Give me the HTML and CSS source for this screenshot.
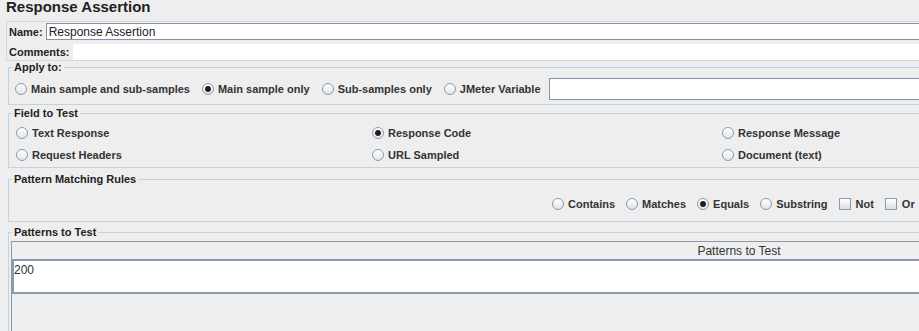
FILE: index.html
```html
<!doctype html>
<html lang="en">
  <head>
    <meta charset="UTF-8" />
    <title>Response Assertion</title>
    <link rel="stylesheet" href="styles.css">
  </head>
  <body>
    <div class="page">
      <h1 class="title">Response Assertion</h1>

      <!-- Name / comments -->
      <div class="name-panel">
        <div class="name-row">
          <label>Name:</label>
          <input class="text-field" type="text" value="Response Assertion" />
        </div>
        <div class="name-row">
          <label>Comments:</label>
          <div class="comment-field"></div>
        </div>
      </div>

      <fieldset class="group apply-to">
        <legend>Apply to:</legend>
        <div class="option-row">
          <span class="option"><span class="radio"></span>Main sample and sub-samples</span>
          <span class="option"><span class="radio on"></span>Main sample only</span>
          <span class="option"><span class="radio"></span>Sub-samples only</span>
          <span class="option"><span class="radio"></span>JMeter Variable</span>
          <div class="var-field"></div>
        </div>
      </fieldset>

      <fieldset class="group field-test">
        <legend>Field to Test</legend>
        <div class="field-grid">
          <span class="option"><span class="radio"></span>Text Response</span>
          <span class="option"><span class="radio on"></span>Response Code</span>
          <span class="option"><span class="radio"></span>Response Message</span>
          <span class="option"><span class="radio"></span>Request Headers</span>
          <span class="option"><span class="radio"></span>URL Sampled</span>
          <span class="option"><span class="radio"></span>Document (text)</span>
        </div>
      </fieldset>

      <fieldset class="group rules">
        <legend>Pattern Matching Rules</legend>
        <div class="option-row rule-row">
          <span class="option"><span class="radio"></span>Contains</span>
          <span class="option"><span class="radio"></span>Matches</span>
          <span class="option"><span class="radio on"></span>Equals</span>
          <span class="option"><span class="radio"></span>Substring</span>
          <span class="option"><span class="check"></span>Not</span>
          <span class="option"><span class="check"></span>Or</span>
        </div>
      </fieldset>

      <fieldset class="group patterns">
        <legend>Patterns to Test</legend>
        <div class="table">
          <div class="table-head">Patterns to Test</div>
          <div class="table-row">200</div>
          <div class="table-rest"></div>
        </div>
      </fieldset>
    </div>
  </body>
</html>
```

FILE: styles.css
```css
html,
body {
  margin: 0;
  padding: 0;
  background: #eeeeee;
  overflow: hidden;
}
body {
  font-family: "Liberation Sans", Arial, sans-serif;
  font-size: 11px;
  color: #333;
}
.page {
  width: 1460px;
  padding: 0 0 0 6px;
}
.title {
  font-size: 15px;
  font-weight: bold;
  color: #222;
  margin: -2px 0 0 0;
  height: 23px;
  line-height: 18px;
}
.name-panel {
  border: 1px solid #d4d8dc;
  border-right: none;
  padding: 1px 0 0 2px;
  display: flex;
  flex-direction: column;
  gap: 4px;
}
.name-row {
  display: flex;
  align-items: center;
  height: 17px;
}
.name-row + .name-row {
  height: 16px;
}
.name-row label {
  font-weight: bold;
  color: #222;
  padding-right: 3px;
}
.text-field {
  flex: 1;
  height: 17px;
  box-sizing: border-box;
  border: 1px solid #7f95ae;
  border-right: none;
  font-family: "Liberation Sans", Arial, sans-serif;
  font-size: 12px;
  color: #222;
  padding: 0 2px;
  margin: 0;
  outline: none;
}
.comment-field {
  flex: 1;
  height: 16px;
  background: #fff;
}
.group {
  margin: 0 0 0 2px;
  border: 1px solid #bfd3e6;
  border-right: none;
  padding: 0 0 0 6px;
}
.group legend {
  font-weight: bold;
  color: #222;
  padding: 0 2px;
  margin-left: -3px;
  line-height: 12px;
}
.option-row {
  display: flex;
  align-items: center;
  gap: 12px;
  height: 30px;
  padding-top: 1px;
}
.option {
  display: inline-flex;
  align-items: center;
  gap: 4px;
  font-weight: bold;
  white-space: nowrap;
  line-height: 14px;
}
.radio {
  width: 12px;
  height: 12px;
  box-sizing: border-box;
  border-radius: 50%;
  border: 1px solid #8e9aa8;
  background: linear-gradient(#ffffff, #dfe5ec);
}
.radio.on {
  background: radial-gradient(circle, #1c1c1c 0 2.4px, #555 2.8px, transparent 3.4px),
    linear-gradient(#ffffff, #dfe5ec);
}
.check {
  width: 12px;
  height: 12px;
  box-sizing: border-box;
  border: 1px solid #8e9aa8;
  background: linear-gradient(#ffffff, #d8dfe7);
  margin-right: 1px;
}
.var-field {
  flex: 1;
  height: 22px;
  box-sizing: border-box;
  background: #fff;
  border: 1px solid #7f95ae;
  border-right: none;
  margin-left: -4px;
}
.field-test {
  margin-top: 2px;
}
.field-grid {
  display: grid;
  grid-template-columns: 356px 350px 1fr;
  grid-auto-rows: 14px;
  row-gap: 8px;
  padding: 7px 0 5px 1px;
}
.rules {
  margin-top: 5px;
}
.rule-row {
  gap: 11px;
  padding: 12px 0 10px 537px;
  height: 14px;
}
.patterns {
  margin-top: 4px;
  padding: 3px 0 0 2px;
}
.patterns legend {
  margin-left: 1px;
}
.table {
  border-left: 1px solid #8a9aab;
}
.table-head {
  height: 17px;
  line-height: 18px;
  font-size: 12px;
  text-align: center;
  border-top: 1px solid #8a9aab;
  border-bottom: 2px solid #8a9aab;
}
.table-row {
  height: 29px;
  background: #fff;
  font-size: 12px;
  border-left: 2px solid #8a9aab;
  border-bottom: 2px solid #8a9aab;
  line-height: 14px;
  padding: 2px 0 0 0;
}
.table-rest {
  height: 60px;
}
```
